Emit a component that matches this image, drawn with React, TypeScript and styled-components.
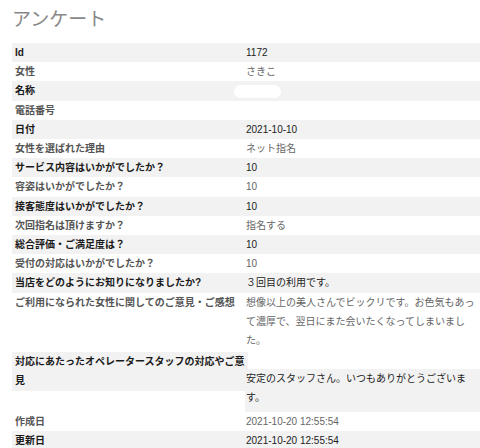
import React from "react";
import styled, { createGlobalStyle } from "styled-components";

const Global = createGlobalStyle`
  html, body { margin: 0; padding: 0; background: #fff; }
  body {
    font-family: "Liberation Sans", "Noto Sans CJK JP", sans-serif;
    font-size: 10px;
  }
`;

const Page = styled.div`
  padding: 6px 0 0 12px;
  width: 468px;
`;

const Title = styled.h1`
  margin: 0 0 13px;
  font-size: 19px;
  line-height: 24px;
  font-weight: 400;
  color: #888;
  font-family: "Noto Sans CJK JP", sans-serif;
`;

const Table = styled.div`
  display: flex;
  flex-direction: column;
`;

const Row = styled.div`
  display: grid;
  grid-template-columns: 233px 1fr;
  align-items: start;
`;

const Label = styled.div<{ $striped: boolean; $split?: boolean }>`
  padding-left: 3px;
  line-height: 19.2px;
  font-weight: 700;
  color: ${(p) => (p.$striped ? "#1a1a1a" : "#555")};
  background: ${(p) => (p.$striped ? "#f2f2f2" : "transparent")};
  margin-top: ${(p) => (p.$split ? "2px" : "0")};
  margin-right: ${(p) => (p.$split ? "-3px" : "0")};
  align-self: ${(p) => (p.$split ? "start" : "stretch")};
`;

const Value = styled.div<{ $striped: boolean; $split?: boolean }>`
  padding-left: 1px;
  line-height: 19.2px;
  color: ${(p) => (p.$striped ? "#222" : "#666")};
  background: ${(p) => (p.$striped ? "#f2f2f2" : "transparent")};
  margin-top: ${(p) => (p.$split ? "19px" : "0")};
  padding-bottom: ${(p) => (p.$split ? "4.6px" : "0")};
  align-self: ${(p) => (p.$split ? "start" : "stretch")};
  min-height: 19.2px;
`;

const Redacted = styled.span`
  display: inline-block;
  vertical-align: middle;
  margin-left: -12px;
  width: 47px;
  height: 13px;
  border-radius: 7px;
  background: #fff;
`;

type Item = { label: string; value: React.ReactNode; split?: boolean };

const items: Item[] = [
  { label: "Id", value: "1172" },
  { label: "女性", value: "さきこ" },
  { label: "名称", value: <Redacted /> },
  { label: "電話番号", value: "" },
  { label: "日付", value: "2021-10-10" },
  { label: "女性を選ばれた理由", value: "ネット指名" },
  { label: "サービス内容はいかがでしたか？", value: "10" },
  { label: "容姿はいかがでしたか？", value: "10" },
  { label: "接客態度はいかがでしたか？", value: "10" },
  { label: "次回指名は頂けますか？", value: "指名する" },
  { label: "総合評価・ご満足度は？", value: "10" },
  { label: "受付の対応はいかがでしたか？", value: "10" },
  { label: "当店をどのようにお知りになりましたか?", value: "３回目の利用です。" },
  {
    label: "ご利用になられた女性に関してのご意見・ご感想",
    value: "想像以上の美人さんでビックリです。お色気もあって濃厚で、翌日にまた会いたくなってしまいました。",
  },
  {
    label: "対応にあたったオペレータースタッフの対応やご意見",
    value: "安定のスタッフさん。いつもありがとうございます。",
    split: true,
  },
  { label: "作成日", value: "2021-10-20 12:55:54" },
  { label: "更新日", value: "2021-10-20 12:55:54" },
];

export default function App() {
  return (
    <>
      <Global />
      <Page>
        <Title>アンケート</Title>
        <Table>
          {items.map((it, i) => {
            const striped = i % 2 === 0;
            return (
              <Row key={it.label}>
                <Label $striped={striped} $split={it.split}>
                  {it.label}
                </Label>
                <Value $striped={striped} $split={it.split}>
                  {it.value}
                </Value>
              </Row>
            );
          })}
        </Table>
      </Page>
    </>
  );
}
